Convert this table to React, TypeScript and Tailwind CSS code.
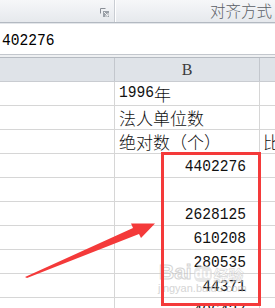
import React from 'react';

const grid = 'border-[#d6d6d6]';
const cjk = "font-['Noto_Sans_CJK_SC',sans-serif] text-[17px] leading-none font-light";
const mono = "inline-block scale-y-[1.08] font-['Liberation_Mono',monospace] text-[14.6px] leading-none";

type RowProps = { b?: React.ReactNode; c?: React.ReactNode; right?: boolean };

const Row = ({ b, c, right }: RowProps) => (
    <div className="grid h-6 grid-cols-[115px_145px_1fr]">
        <div className={`border-r border-b ${grid}`} />
        <div
            className={`flex items-center border-r border-b ${grid} text-[#111] ${
                right ? 'justify-end pt-[3px] pr-[13px]' : 'pl-[4px]'
            }`}
        >
            {b}
        </div>
        <div className={`flex items-center border-b ${grid} pl-[3px] text-[#111]`}>{c}</div>
    </div>
);

const Num = ({ v }: { v: string }) => <span className={mono}>{v}</span>;

// dialog launcher in the ribbon group corner
const LauncherIcon = () => (
    <svg width="9" height="9" viewBox="0 0 9 9" fill="none">
        <path d="M0.5 0.5h5M0.5 0.5v5" stroke="#8a8f96" strokeWidth="1" />
        <rect x="3" y="3" width="6" height="6" fill="#9aa0a7" />
        <path d="M4 4l4 4M8 5v3H5" stroke="#f2f3f5" strokeWidth="1" />
    </svg>
);

export default function App() {
    return (
        <div className="relative h-[308px] w-[275px] overflow-hidden bg-white">
            {/* ribbon strip */}
            <div className="flex h-[23px] border-b border-[#b3b9c1] bg-linear-to-b from-[#f6f7f9] to-[#e6e9ed]">
                <div className="flex w-[115px] items-start justify-end border-r border-[#c9cdd3] pt-[8px] pr-[5px] shadow-[1px_0_0_#ffffff]">
                    <LauncherIcon />
                </div>
                <div className="flex flex-1 items-center justify-end pr-[3px]">
                    <span className="font-['Noto_Sans_CJK_SC',sans-serif] text-[15.5px] leading-none font-light text-[#5a5f66]">
                        对齐方式
                    </span>
                </div>
            </div>

            {/* formula bar */}
            <div className="flex h-[32px] items-center border-t border-b border-t-[#e3e6ea] border-b-[#c3c7cd] bg-white pl-[2px] pt-[3px]">
                <span className="inline-block scale-y-[1.15] font-['Liberation_Mono',monospace] text-[14.6px] leading-none text-black">
                    402276
                </span>
            </div>
            <div className="h-[2px] bg-[#eef0f2]" />

            {/* column headers */}
            <div className="grid h-[25px] grid-cols-[115px_145px_1fr] border-t border-b border-t-[#b5bac1] border-b-[#c9ccd1] bg-[#dfe3e8]">
                <div className="border-r border-[#c3c7cd]" />
                <div className="flex items-center justify-center border-r border-[#c3c7cd]">
                    <span className="font-['Liberation_Serif',serif] text-[16px] leading-none text-[#3c3c3c]">B</span>
                </div>
                <div />
            </div>

            {/* sheet rows */}
            <Row b={<><Num v="1996" /><span className={cjk}>年</span></>} />
            <Row b={<span className={cjk}>法人单位数</span>} />
            <Row b={<span className={cjk}>绝对数（个）</span>} c={<span className={cjk}>比</span>} />
            <Row right b={<Num v="4402276" />} />
            <Row />
            <Row right b={<Num v="2628125" />} />
            <Row right b={<Num v="610208" />} />
            <Row right b={<Num v="280535" />} />
            <Row right b={<Num v="44371" />} />
            <Row right b={<Num v="406437" />} />

            {/* watermark */}
            <div className="pointer-events-none absolute top-[261px] left-[159px] flex items-end gap-[2px] opacity-60">
                <span className="font-['Liberation_Sans',sans-serif] text-[21px] leading-none font-bold text-white [-webkit-text-stroke:1px_#b8b8b8]">
                    Bai
                </span>
                <span className="rounded-[6px] bg-[#d8d8d8] px-[1px] font-['Liberation_Sans',sans-serif] text-[13px] leading-[16px] font-bold text-white">
                    du
                </span>
                <span className="font-['Noto_Sans_CJK_SC',sans-serif] text-[15px] leading-none font-bold text-white [-webkit-text-stroke:0.6px_#bdbdbd]">
                    经验
                </span>
            </div>
            <div className="pointer-events-none absolute top-[283px] left-[158px] font-['Liberation_Sans',sans-serif] text-[11px] leading-none text-[#c4c4c4] opacity-70">
                jingyan.baidu.com
            </div>

            {/* highlight frame */}
            <div className="pointer-events-none absolute top-[152px] left-[161px] h-[154px] w-[100px] border-[3px] border-[#f43a3a]" />

            {/* pointer arrow */}
            <svg className="pointer-events-none absolute inset-0" width="275" height="308" viewBox="0 0 275 308">
                <polygon
                    points="25,277 133,228 131,223.5 155,223.5 141,238 139,234 27,278"
                    fill="#f43a3a"
                />
            </svg>
        </div>
    );
}
